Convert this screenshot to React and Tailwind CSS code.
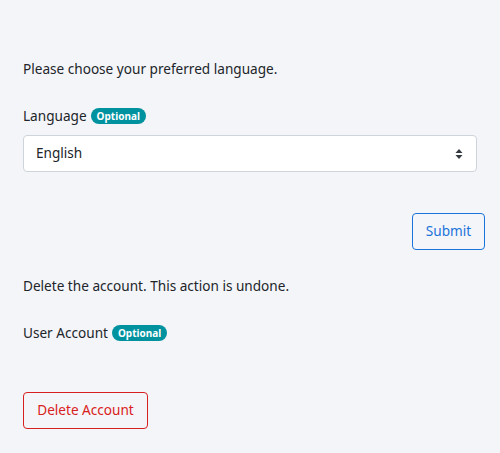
import React from "react";

function Badge() {
  return (
    <span className="ml-1 inline-flex h-[16px] items-center rounded-full bg-[#00929f] px-[6px] text-[10px] font-bold leading-none text-white">
      Optional
    </span>
  );
}

export default function App() {
  return (
    <div
      className="min-h-[453px] w-[500px] bg-[#f4f5f9] text-[13.6px] text-[#212529]"
      style={{ fontFamily: '"Noto Sans", "Open Sans", sans-serif' }}
    >
      <div className="px-[23px] pt-[59px]">
        <p className="leading-[20px]">Please choose your preferred language.</p>

        <div className="mt-[27px] flex items-center leading-[20px]">
          <span>Language</span>
          <Badge />
        </div>

        <div className="relative mt-[9px] h-[37px] w-[454px] rounded-[4px] border border-[#ced4da] bg-white">
          <span className="absolute left-[12px] top-[7px] leading-[20px]">English</span>
          <svg className="absolute right-[13px] top-[12px]" width="8" height="12" viewBox="0 0 8 12">
            <path d="M4 1 L7.5 5 L0.5 5 Z" fill="#343a40" />
            <path d="M4 11 L7.5 7 L0.5 7 Z" fill="#343a40" />
          </svg>
        </div>

        <div className="mt-[41px] flex justify-end">
          <button className="mr-[-8px] h-[37px] w-[73px] rounded-[4px] border border-[#1a73d9] bg-transparent text-[#1a73d9]">
            Submit
          </button>
        </div>

        <p className="mt-[26px] leading-[20px]">Delete the account. This action is undone.</p>

        <div className="mt-[27px] flex items-center leading-[20px]">
          <span>User Account</span>
          <Badge />
        </div>

        <button className="mt-[49px] h-[37px] w-[125px] rounded-[4px] border border-[#d92020] bg-transparent text-[#d92020]">
          Delete Account
        </button>
      </div>
    </div>
  );
}
